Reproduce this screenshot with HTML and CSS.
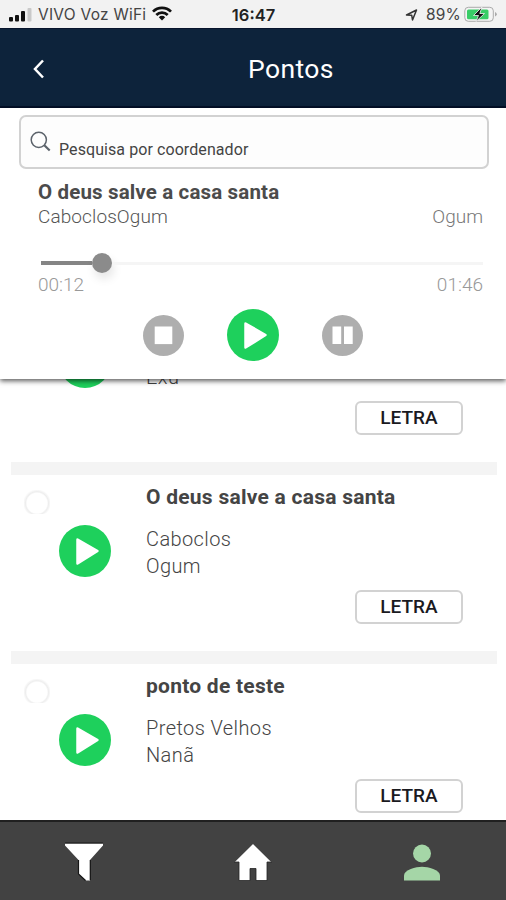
FILE: index.html
```html
<!DOCTYPE html>
<html lang="pt-BR">
<head>
<meta charset="utf-8">
<title>Pontos</title>
<link rel="stylesheet" href="styles.css">
</head>
<body>
<svg width="0" height="0" class="defs" aria-hidden="true">
  <symbol id="play" viewBox="0 0 52 52"><circle cx="26" cy="26" r="26" fill="#1ed05c"/><path d="M18.5 14.5 38.5 26 18.5 38.5Z" fill="#fff" stroke="#fff" stroke-width="2.5" stroke-linejoin="round"/></symbol>
</svg>
<div class="screen">
  <div class="status">
    <div class="status-left">
      <svg class="signal" width="23" height="14" viewBox="0 0 23 14"><g fill="#111"><rect x="0" y="9" width="4" height="4.500" rx="1"/><rect x="6" y="7" width="4" height="6.500" rx="1"/><rect x="12" y="3" width="4" height="10.500" rx="1"/></g><rect x="18.500" y="0" width="4" height="13.500" rx="1" fill="#c9c9c9"/></svg>
      <span class="carrier">VIVO Voz WiFi</span>
      <svg class="wifi" width="20" height="15" viewBox="0 0 20 15"><g fill="none" stroke="#111" stroke-width="2.700"><path d="M1 5.600a12.700 12.700 0 0 1 18 0"/><path d="M4.300 9a8 8 0 0 1 11.400 0"/></g><path d="M6.800 11.200a4.500 4.500 0 0 1 6.400 0L10 14.500Z" fill="#111"/></svg>
    </div>
    <span class="clock">16:47</span>
    <div class="status-right">
      <svg width="13" height="12" viewBox="0 0 13 12"><path d="M1.500 6 11.500 1 7.500 11 6.700 6.200Z" fill="none" stroke="#333" stroke-width="1.500" stroke-linejoin="round"/></svg>
      <span class="percent">89%</span>
      <svg class="battery" width="34" height="17" viewBox="0 0 34 17"><rect x=".8" y="1.300" width="28.500" height="14" rx="3.500" fill="#f4f4f4" stroke="#aaa"/><rect x="3" y="3.500" width="21.500" height="9.700" rx="1.500" fill="#39cd67"/><path d="M31 6v4.500q1.800-.7 1.800-2.250T31 6Z" fill="#aaa"/><path d="M18 1 9.500 9.500h5L12 15.500l8.500-8h-4.700Z" fill="#111" stroke="#f4f4f4" stroke-width=".8"/></svg>
    </div>
  </div>
  <header class="header">
    <svg class="back" width="14" height="20" viewBox="0 0 14 20"><path d="M12 1.500 4 10l8 8.500" fill="none" stroke="#fff" stroke-width="2.500"/></svg>
    <h1>Pontos</h1>
  </header>
  <section class="player">
    <div class="search">
      <svg width="22" height="22" viewBox="0 0 22 22"><g fill="none" stroke="#5c636b"><circle cx="8.800" cy="8.800" r="7.600" stroke-width="1.500"/><path d="m14.300 14.300 5.400 5.200" stroke-width="2.200"/></g></svg>
      <span>Pesquisa por coordenador</span>
    </div>
    <h2 class="now">O deus salve a casa santa</h2>
    <div class="row meta"><span class="group">CaboclosOgum</span><span class="orixa">Ogum</span></div>
    <div class="track"><i class="done"></i><i class="knob"></i><i class="rest"></i></div>
    <div class="row times"><span>00:12</span><span>01:46</span></div>
    <div class="controls">
      <svg width="41" height="41" viewBox="0 0 41 41"><circle cx="20.500" cy="20.500" r="20.500" fill="#aeaeae"/><rect x="11.700" y="11.500" width="17.600" height="17.600" fill="#fff"/></svg>
      <svg width="52" height="52"><use href="#play"/></svg>
      <svg width="41" height="41" viewBox="0 0 41 41"><circle cx="20.500" cy="20.500" r="20.500" fill="#aeaeae"/><path d="M10.500 11.500h8.700v17.600h-8.700zM22 11.500h8.700v17.600H22z" fill="#fff"/></svg>
    </div>
  </section>
  <main class="list">
    <article class="item first">
      <svg class="play" width="52" height="52"><use href="#play"/></svg>
      <div class="info"><p>Exu</p></div>
      <button>LETRA</button>
    </article>
    <article class="item">
      <span class="loader"></span>
      <svg class="play" width="52" height="52"><use href="#play"/></svg>
      <div class="info"><h3>O deus salve a casa santa</h3><p>Caboclos</p><p>Ogum</p></div>
      <button>LETRA</button>
    </article>
    <article class="item">
      <span class="loader"></span>
      <svg class="play" width="52" height="52"><use href="#play"/></svg>
      <div class="info"><h3>ponto de teste</h3><p>Pretos Velhos</p><p>Nanã</p></div>
      <button>LETRA</button>
    </article>
  </main>
  <nav class="tabs">
    <span><svg width="40" height="40" viewBox="0 0 40 40"><path d="M1 1.500h38v2L26 18v20.500h-4L14.500 32V18L1 3.500Z" fill="#fff"/><path d="M1 1h38M14.500 18v14l7 6.500M26.300 18v20" fill="none" stroke="#171717" stroke-width="1.200"/></svg></span>
    <span><svg width="38" height="38" viewBox="0 0 38 38"><path d="M19 .5.3 19H5V37.500h11V25.500h6v12h11V19h4.700Z" fill="#fff" stroke="#242424" stroke-width=".8"/></svg></span>
    <span><svg width="36" height="37" viewBox="0 0 36 37"><g fill="#a5d6a7"><circle cx="18" cy="9.500" r="9"/><path d="M0 36.500v-5C0 25.500 12 22.700 18 22.700s18 2.800 18 8.800v5Z"/></g></svg></span>
  </nav>
</div>
</body>
</html>
```
FILE: styles.css
```css
* { box-sizing: border-box; margin: 0; padding: 0; }
body { width: 506px; height: 900px; overflow: hidden; background: #fff; font-family: Roboto, sans-serif; }
.defs { display: none; }
.screen { display: flex; flex-direction: column; height: 900px; }
svg { display: block; flex: none; }

.status { height: 28px; background: #f2f2f2; display: grid; grid-template-columns: 1fr auto 1fr; align-items: center; padding: 1px 8px 0 9px; font-family: Inter, sans-serif; color: #444; }
.status-left, .status-right { display: flex; align-items: center; }
.status-right { justify-content: flex-end; }
.carrier { font-size: 15.5px; letter-spacing: .25px; margin-left: 6px; white-space: nowrap; }
.wifi { margin-left: 6px; margin-top: -3px; }
.clock { font-size: 16.5px; font-weight: 600; color: #222; }
.percent { font-size: 15.5px; letter-spacing: .2px; margin: 0 3px 0 8px; }

.header { height: 80px; background: #0d233b; border-top: 1px solid #07142c; border-bottom: 2px solid #020f28; display: grid; grid-template-columns: 1fr auto 1fr; align-items: center; color: #fff; }
.back { margin-left: 31px; margin-top: 2px; }
.header h1 { font-size: 26.5px; font-weight: 400; letter-spacing: .4px; margin: 1px 0 0 76px; }

.player { position: relative; z-index: 1; height: 271px; flex: none; background: #fff; box-shadow: 0 2px 5px rgba(0,0,0,.65); padding: 7px 23px 0 38px; }
.search { height: 54px; margin: 0 -6px 0 -19px; border: 2px solid #d2d2d2; border-radius: 7px; background: #fdfdfd; display: flex; padding: 14px 0 0 9px; }
.search span { font-size: 16px; letter-spacing: .08px; line-height: 20px; color: #444; margin: 9px 0 0 7px; }
.now { font-size: 20.5px; letter-spacing: .15px; line-height: 24px; margin-top: 11px; color: #4b4b4b; font-weight: 700; white-space: nowrap; }
.row { display: flex; justify-content: space-between; line-height: 24px; font-size: 19px; }
.meta { margin-top: 1px; color: #555; }
.group { font-weight: 300; letter-spacing: .1px; }
.orixa { color: #777; font-weight: 300; }
.track { display: flex; align-items: center; height: 20px; margin: 24px 0 0 3px; }
.done { width: 51px; height: 4px; background: #858585; }
.knob { width: 20px; height: 20px; border-radius: 50%; background: #8b8b8b; box-shadow: 2px 6px 10px rgba(0,0,0,.1); }
.rest { flex: 1; height: 3px; background: #f5f5f5; }
.times { color: #999; font-weight: 300; }
.controls { display: flex; align-items: center; justify-content: center; gap: 43px; margin: 12px 0 0 -15px; }

.list { flex: 1; min-height: 0; overflow: hidden; padding: 0 9px 0 11px; }
.item { height: 189px; border-bottom: 13px solid #f4f4f4; display: grid; grid-template-columns: 48px 87px 1fr; grid-template-rows: 115px 34px; }
.first { margin-top: -93px; }
.loader { width: 26px; height: 24px; margin: 15px 0 0 13px; border-radius: 7px; background: radial-gradient(circle at 50% 55%, #fff 0 10px, #eee 11.5px, #fff 14px); }
.play { grid-column: 2; margin-top: 49.5px; }
.info { padding-top: 9px; }
.first .info { padding-top: 78px; }
h3 { font-size: 21px; letter-spacing: .25px; line-height: 26px; color: #444; white-space: nowrap; }
.info p { font-size: 20px; line-height: 27px; color: #444; font-weight: 300; letter-spacing: .4px; }
h3 + p { margin-top: 16px; }
button { grid-row: 2; grid-column: 3; justify-self: end; margin-right: 34px; width: 108px; height: 34px; border: 2px solid #d2d2d2; border-radius: 6px; background: #fff; font: 500 19px Roboto, sans-serif; color: #1a1a1f; padding-bottom: 2px; }

.tabs { height: 80px; flex: none; background: #424242; border-top: 2px solid #202020; display: grid; grid-template-columns: repeat(3, 1fr); }
.tabs span { display: grid; place-items: center; padding-top: 2px; }
```
